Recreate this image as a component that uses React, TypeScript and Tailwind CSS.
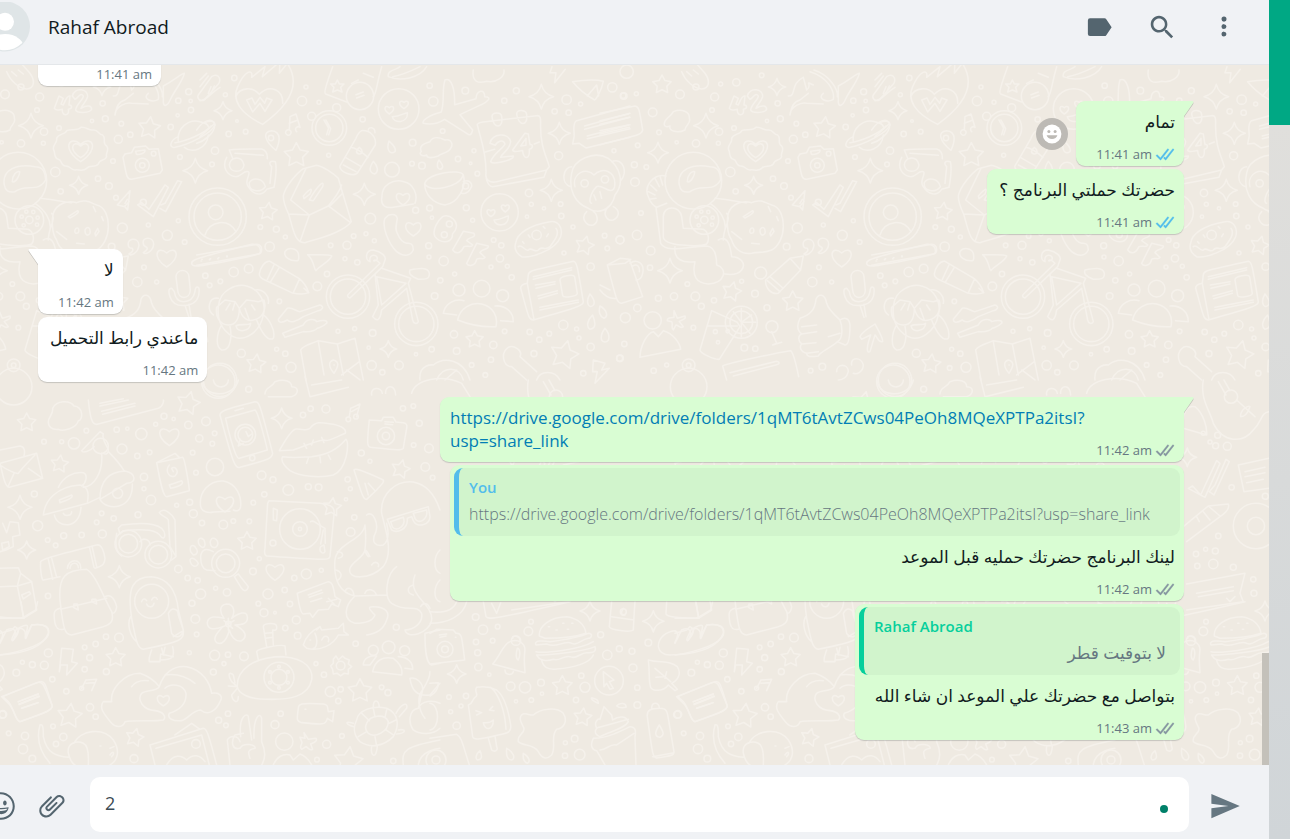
import React from "react";

type Dot = [number, number, number];

const starPath = (x: number, y: number, r: number, turn = 0) => {
  let d = "";
  for (let i = 0; i < 10; i++) {
    const a = -Math.PI / 2 + turn + (i * Math.PI) / 5;
    const k = i % 2 ? r * 0.52 : r;
    d += (i ? "L" : "M") + (x + k * Math.cos(a)).toFixed(1) + " " + (y + k * Math.sin(a)).toFixed(1);
  }
  return d + "Z";
};

const sparkPath = (x: number, y: number, r: number) => {
  const k = r * 0.2;
  return `M${x} ${y - r}Q${x + k} ${y - k} ${x + r} ${y}Q${x + k} ${y + k} ${x} ${y + r}Q${x - k} ${y + k} ${x - r} ${y}Q${x - k} ${y - k} ${x} ${y - r}Z`;
};

const heartPath = (x: number, y: number, r: number) =>
  `M${x} ${y + r}C${x - r * 1.6} ${y} ${x - r} ${y - r * 1.3} ${x} ${y - r * 0.45}C${x + r} ${y - r * 1.3} ${x + r * 1.6} ${y} ${x} ${y + r}Z`;

interface LayerProps {
  x: number;
  y: number;
  dots: Dot[];
  stars: Dot[];
  sparks: Dot[];
  hearts: Dot[];
  lines: string[];
}

function Layer({ x, y, dots, stars, sparks, hearts, lines }: LayerProps) {
  return (
    <g transform={`translate(${x} ${y}) scale(0.3333)`}>
      {dots.map(([cx, cy, r], i) => (
        <circle key={i} cx={cx} cy={cy} r={r} />
      ))}
      <path d={stars.map(([a, b, r], i) => starPath(a, b, r, (i % 3) * 0.12)).join("")} />
      <path d={sparks.map(([a, b, r]) => sparkPath(a, b, r)).join("")} />
      <path d={hearts.map(([a, b, r]) => heartPath(a, b, r)).join("")} />
      <path d={lines.join("")} />
    </g>
  );
}

const layers: LayerProps[] = [
  {
    x: 200,
    y: 5,
    dots: [
      [103, 24, 8], [76, 74, 6], [318, 51, 6], [306, 93, 14], [357, 97, 6], [111, 153, 4], [86, 192, 8], [137, 185, 7], [45, 242, 11], [36, 283, 7],
      [488, 148, 8], [386, 256, 6], [689, 47, 8], [700, 94, 14], [796, 62, 10], [913, 92, 8], [949, 62, 9], [1100, 89, 14], [1064, 124, 8], [1106, 128, 8],
      [1142, 102, 6], [1237, 52, 14], [1270, 77, 8], [1076, 257, 12], [1242, 242, 6], [638, 218, 10], [636, 281, 7], [666, 287, 10], [728, 183, 7], [774, 267, 8],
      [822, 242, 6], [812, 280, 4], [832, 311, 7], [987, 369, 11], [994, 403, 6], [1032, 415, 5], [1082, 402, 7], [1084, 438, 8], [981, 440, 5], [647, 421, 9],
      [689, 414, 9], [696, 443, 5], [799, 413, 9], [818, 451, 6], [511, 446, 16], [461, 498, 7], [498, 491, 6], [523, 512, 6], [441, 526, 12], [392, 526, 7],
      [435, 566, 6], [472, 577, 8], [181, 471, 7], [229, 478, 9], [256, 501, 6], [209, 530, 14], [101, 606, 14], [146, 596, 13], [16, 617, 8], [61, 634, 7],
      [29, 646, 7], [381, 612, 8], [352, 649, 13], [238, 694, 7], [686, 527, 9], [687, 561, 6], [731, 573, 14], [764, 612, 6], [721, 631, 8], [704, 678, 10],
      [873, 591, 6], [900, 565, 11], [922, 589, 6], [935, 622, 8], [881, 510, 7], [904, 526, 8], [1092, 549, 6], [1119, 471, 6], [1214, 497, 7], [1222, 535, 7],
      [1260, 509, 12], [1172, 590, 11], [1090, 765, 14], [1130, 777, 6], [1137, 804, 6], [1172, 831, 11], [1048, 791, 7], [1018, 809, 8], [989, 786, 8], [914, 784, 7],
      [762, 793, 11], [880, 825, 11], [873, 869, 8], [1002, 851, 9], [815, 885, 7], [770, 843, 10], [695, 838, 8], [518, 789, 10], [464, 776, 6], [414, 784, 6],
      [506, 833, 5], [648, 853, 5], [597, 886, 13], [515, 886, 14], [547, 907, 8], [273, 892, 15], [224, 894, 7], [256, 851, 8], [230, 838, 6], [124, 850, 12],
      [856, 915, 7], [1150, 910, 8], [1260, 865, 10],
      [596, 117, 61], [899, 427, 56], [480, 78, 41], [388, 174, 52], [388, 174, 41], [53, 440, 86], [53, 440, 71], [47, 427, 22], [213, 204, 8], [576, 299, 22],
      [444, 680, 65], [444, 680, 53], [649, 762, 65], [649, 762, 53], [748, 462, 9], [733, 494, 9], [1010, 495, 14], [1154, 340, 11], [1215, 328, 11],
      [797, 348, 9], [60, 930, 50], [777, 660, 18], [845, 656, 25], [908, 677, 18], [335, 139, 12], [410, 113, 12],
    ],
    stars: [[289, 256, 38], [204, 425, 28], [1154, 527, 29], [824, 809, 27], [168, 882, 30], [1093, 855, 44]],
    sparks: [[69, 122, 27], [1024, 80, 37], [1078, 190, 33], [493, 373, 33], [1054, 361, 33], [565, 837, 25]],
    hearts: [[568, 119, 13], [612, 103, 13], [873, 428, 12], [916, 414, 12], [609, 385, 20], [640, 475, 23]],
    lines: [
      "M188 163C120 130 95 90 113 50C135 0 160 -5 155 22L195 -10M195 -10L187 20L240 -25L238 10L262 -20C295 30 290 90 188 163M107 80C120 50 160 50 178 73C210 40 250 60 248 100",
      "M140 90L158 126L180 100L195 124L216 90L200 84L194 100L180 82L165 103L156 84Z",
      "M0 92C20 92 30 70 60 52M0 50L25 18M0 30L20 10",
      "M398 -10C380 40 370 70 377 72L440 96M545 -10C530 40 530 70 520 80M412 30L418 42L432 42L422 52L426 66L412 60L398 66L402 52L392 42L406 42ZM468 74L490 66M470 84L492 76M455 40L475 30M490 10L520 22",
      "M565 20C560 0 590 0 600 -10M565 20C600 35 660 25 680 -10M578 20C610 15 640 0 660 -10M820 0C815 35 835 42 860 34C890 40 915 20 912 0",
      "M577 140C600 140 610 130 622 128C625 160 580 162 577 140ZM882 450C905 450 912 440 925 438C928 470 886 472 882 450Z",
      "M735 30C755 20 765 60 764 104L828 86C830 60 855 55 854 80C880 80 860 98 844 104L780 134L818 180C815 195 810 198 800 190L734 148C715 160 690 165 670 160C665 150 690 135 724 126C735 90 725 60 735 30Z",
      "M1056 -10L1050 8L1068 8L1064 38L1096 -2",
      "M1118 35C1150 30 1190 28 1210 34C1205 60 1190 85 1184 90C1150 70 1130 50 1118 35ZM1190 45L1162 78M1190 45L1196 78",
      "M1290 108L1130 152C1115 160 1125 190 1122 202L1118 222L1138 220L1158 234L1290 202M1154 168L1290 130M1154 178L1290 142M1162 198L1290 164M1162 206L1290 176",
      "M288 132L270 140L268 180M288 132L300 172M268 160L294 150M268 180A8 8 0 1 0 262 195A8 8 0 0 0 268 180M300 172A8 8 0 1 0 290 185",
      "M372 150L386 174L380 194M378 150L392 176L386 194",
      "M-10 180C10 150 40 140 44 165C45 190 10 215 -10 220M0 200L42 162M228 241C195 215 185 185 215 182C245 185 240 215 228 241Z",
      "M485 182C510 180 530 200 526 225L475 305C465 325 415 305 420 288L468 205C472 195 475 187 485 182ZM505 180C505 170 525 170 525 188M452 232C470 235 490 250 504 262M436 262L484 290M430 285L468 305M478 232C490 240 488 252 478 252C466 250 468 240 478 232Z",
      "M567 213C580 225 590 235 585 245C570 255 558 240 567 213ZM520 274C535 290 536 305 524 312C508 308 506 295 520 274ZM717 270C730 285 732 295 720 298C710 295 710 280 717 270Z",
      "M664 245C655 225 675 220 690 215C700 195 725 205 735 210C755 205 760 225 752 235C745 250 720 250 715 258C695 265 680 265 680 255C665 262 655 250 664 245Z",
      "M833 168C828 160 840 158 850 156L1010 137C1022 136 1022 145 1022 160C1020 230 1040 260 1048 290L1040 300L890 335C870 340 855 330 858 310C860 250 840 200 833 168ZM878 350L1032 322L1040 300M858 320C860 340 870 350 878 350M856 246L884 238M1003 222L1018 216",
      "M876 140C876 125 905 125 905 140C912 175 880 180 876 140ZM950 132C950 115 980 120 980 134C985 170 955 170 950 132Z",
      "M870 220C875 190 925 185 932 215C930 240 905 250 902 262L940 258C945 270 880 285 872 275C880 250 910 235 915 222C910 205 890 215 886 226ZM975 190L938 240C940 250 965 240 968 242C970 270 990 270 988 238C1000 235 1000 222 990 224L985 192ZM962 228L978 205L978 226Z",
      "M88 240C120 236 160 238 185 237C195 240 203 250 202 266M88 240L98 265M80 262C65 290 80 318 108 320C125 320 130 300 145 305C155 310 130 335 145 350C160 375 185 380 200 358L222 352C228 320 230 290 226 275C210 270 205 280 215 290L210 340M105 250L190 256M88 285C90 260 125 255 132 285C130 310 90 310 88 285ZM148 338C160 320 190 325 196 350C180 370 145 365 148 338Z",
      "M250 378C255 350 290 310 310 296L350 286C370 290 400 310 415 325L428 370L454 455C430 490 340 510 315 518C285 520 280 480 266 432C255 410 250 395 250 378ZM272 390L328 435L385 408C400 390 420 360 425 345M272 390L318 295M266 432L328 435L300 515M388 410L452 458M428 370L388 410M310 378C330 355 340 350 330 372L312 386ZM328 390C350 350 375 325 368 350L340 392Z",
      "M15 495C30 450 85 445 108 485M546 380C545 345 580 325 612 335C640 340 655 375 645 400M546 380C540 410 560 415 580 412L640 402",
      "M674 342C680 310 780 295 790 315C800 350 775 400 735 405C695 400 675 370 674 342ZM674 342C690 370 780 350 788 318M790 335C810 325 820 345 812 355C805 370 790 372 785 370",
      "M565 436C580 430 590 435 592 445C588 470 585 480 592 490C600 510 610 518 620 520C635 518 640 525 640 540C630 560 610 560 590 545C565 520 545 470 555 445Z",
      "M728 440C750 430 775 455 768 475C765 490 755 485 757 500C750 520 720 520 705 500C695 480 715 450 728 440ZM790 484L822 490C830 505 805 500 800 512L818 525C815 535 800 525 792 530C780 555 765 550 758 540ZM830 520L865 528C868 540 845 535 840 548L855 562C850 572 838 560 830 568C825 590 805 590 800 580Z",
      "M947 520C950 490 990 465 1050 455C1075 450 1090 475 1082 500C1065 545 985 565 965 560C950 550 942 535 947 520ZM955 530C965 520 975 545 985 540C995 530 1005 550 1015 540C1025 525 1035 545 1050 530C1065 510 1080 490 1068 475M985 495L990 502M968 515L972 520M1030 470L1035 475M1040 500L1045 492",
      "M1115 310C1120 270 1180 240 1225 265C1260 290 1275 340 1245 375C1235 420 1195 435 1165 415C1125 400 1105 360 1115 310ZM1125 350C1115 310 1160 290 1182 315C1205 290 1250 300 1244 350C1235 380 1205 340 1190 350C1170 370 1165 400 1175 400M1200 365L1205 385M1182 375L1188 390M1115 290C1090 290 1080 340 1112 350M1235 275C1270 260 1285 310 1262 332M1160 425C1140 445 1160 470 1180 465C1200 455 1190 430 1180 425M1225 410C1205 430 1220 455 1240 450C1260 440 1260 420 1240 410",
      "M-10 555L170 523C190 525 188 550 175 552L-10 586M5 568h2M30 566h2M55 563h2M80 558h2M293 572C270 575 250 560 255 545C265 530 290 535 295 550C298 565 295 572 293 572",
      "M323 554C350 556 385 552 395 558C390 575 360 585 348 602C340 595 345 575 323 554Z",
      "M178 612C180 595 195 570 210 574L298 626C315 640 322 655 326 668C310 675 290 672 275 668L190 628C180 622 178 618 178 612ZM202 628L222 585M212 635L238 592M298 628L280 668M326 668L312 655",
      "M448 670L540 580C520 560 515 580 530 570C540 555 505 545 510 575C495 570 495 540 520 540C545 545 560 560 555 570L548 590L450 684C442 682 440 675 448 670ZM530 620L618 640L545 705ZM545 595L632 625L625 640L655 755C650 765 640 760 638 750L620 655L545 720C540 755 530 755 518 740L535 705L525 612M630 600C655 595 685 590 688 610C690 630 670 628 655 628C635 620 625 612 630 600Z",
      "M56 705C60 660 110 640 140 648C180 658 200 700 190 735C180 790 130 815 100 800C60 780 50 740 56 705ZM50 712L75 690L105 695L118 715L140 690L175 695L192 690M78 720L90 700M98 720L104 700M135 715L148 750M155 705L165 720M50 712C45 740 60 765 85 765C110 765 118 740 118 715C125 745 145 755 160 750C190 745 200 715 192 690M108 768C120 760 140 768 152 760C150 785 112 790 108 768ZM65 765C50 790 45 830 65 840C95 845 95 790 90 770M170 750C185 790 205 815 220 805C228 780 205 745 190 735M55 685C25 680 20 720 40 735M165 660C190 655 210 680 205 700",
      "M235 748L262 715C275 710 290 725 300 725L360 705C375 710 365 722 355 722L310 740C290 755 270 760 262 750C245 760 235 758 235 748ZM248 790L310 765C320 745 345 745 350 755C365 750 385 750 380 760C370 770 365 770 352 775C340 788 325 785 310 785L255 802Z",
      "M318 930L302 840C310 825 340 820 355 812L412 822L465 805L490 930M355 815L372 915M412 822L430 915M400 870C385 875 385 890 402 910C415 890 420 875 400 870ZM402 885h1M425 915L478 875M440 900L480 930",
      "M773 750C780 715 815 695 845 702C880 710 895 740 888 770C850 772 810 765 773 750ZM730 730C735 700 765 685 792 692M770 735L730 730M885 708C915 705 940 725 940 755L902 752",
      "M985 615C985 600 1000 602 1120 574C1130 574 1132 585 1150 695C1150 705 1145 710 1000 750C985 750 985 735 962 655C962 645 970 642 982 640ZM982 640L1002 748M1000 620L1115 593M1000 628L1115 600M1006 645L1065 635M1008 655L1065 642M1014 678L1072 662M1016 686L1072 670M1020 712L1135 690M1020 720L1135 697M1080 630C1080 618 1120 612 1124 620L1132 670C1130 680 1090 685 1088 676Z",
      "M1170 672C1185 690 1188 705 1172 710C1160 705 1160 690 1170 672ZM1200 708C1222 720 1225 740 1212 745C1200 740 1195 725 1200 708ZM1178 735C1188 760 1188 775 1170 778C1158 770 1162 750 1178 735ZM1215 775C1232 795 1230 815 1215 816C1200 815 1200 795 1215 775Z",
      "M660 930C655 880 700 885 700 885C730 860 790 865 810 930M710 930C730 885 780 890 790 930M735 930L770 900M1010 905L960 860C970 840 940 825 925 832C900 850 910 890 935 890L980 930M1010 930C1020 900 1065 900 1080 930",
      "M1180 870L1215 880L1205 900L1228 895L1185 940L1192 905L1178 905Z",
    ],
  },
  {
    x: 600,
    y: 5,
    dots: [
      [80, 5, 20], [71, 78, 10], [109, 71, 6], [158, 127, 13], [240, 73, 13], [288, 51, 9], [344, 81, 12], [336, 120, 7], [362, 42, 6], [409, 37, 11],
      [485, 16, 7], [357, 185, 11], [402, 174, 7], [355, 220, 6], [288, 220, 11], [177, 187, 7], [230, 217, 5], [113, 226, 7], [103, 284, 9], [139, 291, 7],
      [105, 336, 13], [123, 429, 7], [60, 510, 12], [111, 495, 14], [152, 542, 13], [150, 593, 8], [533, 100, 8], [541, 146, 9], [501, 153, 5], [589, 161, 7],
      [616, 194, 8], [580, 208, 12], [791, 65, 9], [760, 92, 8], [797, 93, 5], [798, 120, 8], [758, 136, 5], [737, 171, 8], [765, 261, 7], [564, 273, 7],
      [391, 306, 14], [519, 326, 8], [552, 348, 10], [407, 364, 8], [573, 383, 7], [655, 397, 9], [592, 474, 15], [670, 465, 6], [760, 452, 6], [727, 496, 15],
      [560, 530, 10], [779, 516, 7], [637, 636, 14], [657, 592, 7], [695, 636, 6], [482, 609, 18], [425, 634, 6], [465, 671, 10], [501, 713, 9], [262, 642, 7],
      [175, 685, 9], [222, 679, 11], [286, 679, 13], [304, 709, 9], [342, 691, 8], [112, 714, 11], [76, 743, 15], [73, 822, 8], [280, 773, 7], [59, 865, 9],
      [433, 833, 10], [466, 836, 8], [354, 817, 5], [346, 785, 6], [383, 784, 5], [200, 885, 6], [161, 902, 8], [632, 902, 7], [667, 890, 10],
      [280, 332, 85], [313, 450, 43], [313, 450, 11], [290, 440, 5], [304, 425, 5], [325, 426, 5], [338, 443, 5], [336, 464, 5], [296, 466, 5],
      [652, 286, 21], [652, 286, 8], [686, 251, 7], [266, 886, 19], [266, 886, 7], [266, 950, 55], [424, 757, 48], [424, 757, 34], [158, 751, 26],
      [516, 770, 18], [880, 935, 50],
    ],
    stars: [[186, 44, 29], [673, 174, 34], [395, 665, 30], [578, 695, 32]],
    sparks: [[531, 51, 26], [318, 167, 37], [174, 248, 31], [811, 302, 37], [461, 346, 27], [210, 602, 37]],
    hearts: [[467, 239, 36], [467, 239, 24], [725, 562, 29]],
    lines: [
      "M245 5C255 30 280 55 305 57C330 55 330 30 315 10L280 -30M260 5L275 18M280 0L295 12",
      "M402 78L388 115C395 125 405 118 412 118C410 140 435 140 430 118C445 115 440 105 432 105L435 78C425 75 420 95 415 105L408 102L415 85ZM442 78C450 50 490 55 488 80C485 95 470 105 468 115C485 105 500 105 500 118C495 130 455 130 452 120C455 100 475 90 475 78C465 65 460 85 450 88Z",
      "M570 135C570 110 605 95 620 100L670 102M565 78C590 80 570 40 610 22M610 22L620 60C640 45 610 30 640 45M630 5C680 20 705 60 700 88C680 100 650 85 670 70M625 70L600 90C580 95 575 110 570 135M642 0C690 15 715 60 712 80",
      "M715 48C750 30 770 10 778 10C775 30 750 60 738 85C728 110 715 112 715 95Z",
      "M820 75L860 20C875 10 890 20 882 40L838 90C825 95 815 85 820 75ZM850 70L858 50M858 70L868 48",
      "M0 130L105 108C118 110 118 120 128 180C125 195 115 195 0 224M0 152L85 132M0 163L88 142M0 182L85 165M0 192L88 172",
      "M193 165C190 145 210 145 220 125C245 115 270 125 268 145C275 160 255 165 255 180C235 190 205 185 210 168C200 172 195 170 193 165Z",
      "M386 240C380 225 398 220 395 205C400 190 420 195 425 182C440 175 455 185 468 172C485 170 490 182 505 180C520 178 520 195 533 195C545 205 530 220 545 228C555 240 540 250 545 260C540 275 525 265 520 282C510 295 495 282 485 295C470 308 460 295 450 300C435 300 435 285 420 288C405 285 412 270 400 268C385 262 392 250 386 240Z",
      "M600 252L620 248L628 232L662 228L672 238L700 236L712 300L705 310L620 328C605 328 605 320 594 262ZM632 244L660 240C662 250 640 256 634 252Z",
      "M760 215C755 175 790 145 825 155C840 158 850 165 850 170M778 232C800 250 845 240 850 195M760 200C735 210 730 235 750 232C790 225 860 190 870 165C870 150 850 152 840 158M750 218C780 215 840 190 858 168",
      "M615 362L577 405L600 410L608 420ZM600 400L607 388M600 408L612 395",
      "M638 405L650 398L672 418L720 345L730 352L685 440ZM705 415L722 425L770 335L758 332L720 400L708 405",
      "M238 345C230 300 275 280 330 290C350 290 360 300 362 330C340 370 300 340 270 365C250 370 240 360 238 345ZM262 335C262 315 275 302 284 305C285 315 272 340 262 335",
      "M198 318C160 310 130 350 145 380C150 400 165 410 170 412L200 400M180 318L188 345M165 325L178 350M152 345L170 362M145 365L165 375M148 388L168 385M190 440C190 405 240 405 245 440L250 475L310 478C325 485 330 510 320 522C300 530 190 530 190 500ZM168 412L182 520C200 550 260 530 320 528C345 530 350 560 350 585M225 530C220 570 250 580 285 575C275 620 290 640 325 642C375 640 385 595 350 585M355 510C380 495 390 520 395 560C420 560 440 580 425 600C410 620 375 612 372 612M345 385C400 390 430 400 440 398M370 510C370 470 395 450 380 430M330 400C360 420 380 450 375 480",
      "M385 430C395 400 430 390 455 398C480 385 500 400 515 405C540 410 550 440 550 470C550 500 535 530 515 540C490 550 475 545 455 550C420 555 400 530 395 510C380 490 380 450 385 430ZM430 440L458 422C465 425 455 435 435 444ZM480 480C485 468 498 470 495 490C488 500 480 495 480 480ZM510 490L518 475L522 485L512 498ZM450 480C455 468 465 475 460 488C452 492 448 488 450 480ZM455 520L478 522M530 440L535 452M505 410L512 425M395 485L425 508",
      "M610 525C605 505 640 500 642 525C640 550 615 560 612 552C625 545 625 540 622 535C612 535 610 530 610 525ZM655 520C650 500 685 498 686 522C685 545 660 555 655 548C668 540 668 535 665 532C658 530 655 525 655 520Z",
      "M800 580C800 570 810 565 980 523C1000 520 1010 535 1005 550C985 560 830 588 815 588C805 588 800 585 800 580ZM828 573h2M853 569h2M878 566h2M905 560h2",
      "M497 630L570 565L610 558L602 600L535 670C515 675 495 655 497 630ZM510 620L550 655M502 632L540 665M570 565L602 600",
      "M753 620C755 595 790 595 792 620L796 660C795 690 760 690 758 660ZM740 655C730 655 730 665 735 680C745 710 775 708 790 705C815 700 825 680 822 655C815 645 810 655 810 665C805 690 790 695 775 695C755 695 750 680 748 665ZM780 706L792 742M792 703L798 740",
      "M22 585L60 565L88 568L128 680L65 700C50 700 50 690 22 585ZM22 585L75 580L92 568M90 580C110 565 135 580 128 610C125 625 115 630 108 630M98 588C112 580 120 590 118 605M0 645L30 660M0 660C15 680 30 688 50 685",
      "M120 862C120 830 140 790 160 785L175 800L190 782C220 790 240 820 242 838ZM222 722L232 745L255 738C260 750 240 750 238 755L250 770C240 778 235 765 228 765L220 780C212 775 220 762 215 755L202 752C200 742 215 745 222 742Z",
      "M335 722L412 757L420 770L358 868C345 870 300 850 300 840L335 722ZM322 768L412 768M424 757L400 725M424 757L450 790M424 757L455 735M424 757V800M424 757V715M424 757H468M515 785L530 820L518 825L545 817",
      "M648 688C655 670 675 670 680 700C685 720 715 745 720 750C728 770 728 800 718 810C700 830 660 845 655 858C630 862 620 860 620 850C600 845 598 830 605 822C592 812 595 795 605 792C590 780 590 765 600 745C630 735 645 720 648 688ZM605 792L650 785M605 822L648 818M620 850L655 845M650 765L605 770M720 750C735 740 748 745 750 765C750 805 745 825 735 825L712 815M685 800L720 790",
      "M780 800C790 780 815 770 825 762C835 780 850 805 848 815C835 820 832 800 825 795L810 845C800 850 798 835 812 795L785 808Z",
      "M380 930L368 888C375 880 550 845 572 842C582 850 590 890 596 920M390 908L530 874C540 876 540 882 530 884L400 918M710 905C710 880 745 880 745 905C740 925 725 930 715 930M755 885C750 860 785 860 790 885C790 905 770 915 760 910",
    ],
  },
  {
    x: 0,
    y: 335,
    dots: [
      [132, 125, 7], [185, 125, 6], [222, 130, 17], [259, 92, 7], [350, 89, 8], [382, 86, 5], [424, 102, 17], [366, 147, 15], [449, 157, 7], [412, 168, 8],
      [467, 73, 6], [492, 49, 9], [521, 57, 5], [565, 75, 11], [618, 64, 13], [598, 115, 11], [644, 100, 7], [637, 131, 7], [578, 158, 7], [588, 218, 7],
      [432, 231, 11], [432, 266, 6], [453, 300, 14], [569, 307, 9], [530, 316, 6], [580, 341, 12], [606, 369, 8], [670, 374, 13], [700, 363, 7], [748, 364, 7],
      [760, 308, 7], [793, 283, 8], [785, 226, 13], [819, 239, 9], [865, 270, 16], [925, 260, 9], [956, 262, 10], [909, 45, 8], [932, 26, 8], [978, 27, 12],
      [1209, 25, 8], [1240, 18, 7], [1258, 70, 9], [1241, 135, 7], [1287, 145, 13], [1084, 159, 9], [1110, 184, 6], [1276, 201, 13], [1298, 233, 7], [1043, 238, 8],
      [1051, 266, 6], [1038, 298, 5], [1063, 352, 8], [1052, 396, 13], [103, 282, 9], [113, 377, 15], [143, 420, 7], [167, 436, 7], [191, 407, 9], [245, 405, 8],
      [307, 402, 12], [305, 340, 7], [341, 355, 8], [414, 344, 9], [290, 367, 7], [144, 588, 8], [535, 507, 11], [563, 534, 8], [593, 541, 8], [602, 582, 15],
      [576, 610, 9], [586, 657, 13], [590, 703, 7], [647, 565, 6], [681, 577, 11], [759, 514, 10], [778, 476, 6], [804, 582, 15], [854, 570, 8], [870, 612, 8],
      [775, 611, 7], [792, 638, 12], [825, 638, 4], [889, 660, 12], [856, 684, 8], [893, 707, 10], [883, 534, 8], [919, 522, 15], [964, 511, 6], [1067, 731, 8],
      [1189, 682, 9], [145, 759, 12], [133, 796, 12], [97, 794, 9], [67, 787, 6], [49, 818, 10], [157, 838, 8], [199, 874, 8], [254, 742, 7], [287, 732, 8],
      [318, 710, 8], [357, 713, 13], [269, 773, 9], [254, 808, 8], [319, 815, 9], [568, 758, 6], [644, 766, 15], [684, 764, 8], [732, 769, 13], [672, 791, 6],
      [640, 816, 9], [948, 791, 6], [972, 824, 8], [991, 875, 15], [1022, 868, 8], [1015, 903, 8], [1145, 862, 7], [1164, 878, 9], [270, 922, 11], [287, 950, 8],
      [159, 979, 7], [190, 1011, 11], [168, 1032, 8], [75, 1008, 11], [26, 1000, 7], [69, 1047, 14], [97, 1076, 10], [402, 1076, 12], [684, 941, 8], [656, 961, 9],
      [678, 976, 7], [842, 941, 8], [825, 974, 12], [980, 1033, 12], [1026, 1008, 7], [951, 1079, 7], [1180, 1083, 8], [9, 943, 11],
      [736, 104, 31], [736, 104, 22], [757, 174, 8], [645, 201, 26], [900, 387, 61], [900, 387, 22], [900, 387, 5], [819, 429, 9], [385, 431, 40], [385, 431, 28],
      [475, 464, 40], [475, 464, 28], [677, 490, 42], [677, 490, 28], [455, 604, 51], [837, 832, 45], [837, 832, 24], [837, 800, 4], [864, 816, 4], [864, 848, 4],
      [837, 864, 4], [810, 848, 4], [810, 816, 4], [1158, 108, 26], [1158, 108, 11], [1022, 797, 13], [1120, 751, 15], [1166, 742, 19], [1214, 752, 15],
      [588, 1032, 13], [853, 1025, 26], [353, 280, 15], [302, 138, 23], [685, 672, 8],
    ],
    stars: [[80, 68, 29], [179, 192, 27], [565, 10, 36], [741, 424, 29], [996, 322, 29], [1202, 208, 29], [347, 773, 30], [209, 948, 38], [404, 1013, 28], [1080, 873, 37], [1045, 1085, 45]],
    sparks: [[845, 55, 31], [60, 322, 36], [80, 450, 27], [358, 530, 33]],
    hearts: [[508, 108, 29], [825, 514, 27], [675, 310, 26], [490, 900, 18]],
    lines: [
      "M145 65C145 50 160 45 158 25C170 0 210 0 222 18C250 20 250 60 235 62C230 85 190 95 175 88C155 90 145 80 145 65Z",
      "M265 0C270 50 275 75 292 73L475 25C490 20 492 0 490 0M300 10L370 -4M300 18L385 0M305 34L405 10M308 43L405 18",
      "M0 190L110 160L128 235L28 262C15 262 10 230 0 190ZM5 198C20 210 50 222 55 220C70 200 90 180 105 165M25 258L42 220M85 205L128 235M0 150L60 138C75 140 75 155 72 168",
      "M245 152L300 95L310 102C305 115 315 130 324 145C328 160 318 165 310 160M245 152C248 160 270 155 282 140M305 160C310 220 280 260 250 262M325 155C350 180 365 200 372 212M130 345C135 300 170 260 240 255C270 260 265 290 262 310ZM175 262C190 230 220 215 250 218C265 225 258 250 245 258M163 345C170 385 240 390 243 322M190 340C195 350 215 348 215 335M300 298C300 240 330 215 375 213C410 220 410 250 380 250ZM300 298C320 335 400 330 397 252M262 310L300 292M178 300L215 285C222 292 205 300 180 308Z",
      "M660 45C660 35 665 30 765 5C778 5 780 12 818 160C816 175 810 178 720 202C705 204 702 200 660 45ZM677 55L765 30C775 35 800 140 802 150L718 175C705 180 680 70 677 55ZM705 32L730 25M738 95L745 110L755 102M720 118L715 138L730 130",
      "M470 188L525 160L538 172M470 188L548 172C555 175 568 265 568 272L500 290C488 290 480 240 470 188ZM508 195C495 210 505 235 525 228C540 215 525 195 515 205L520 215M508 255L545 242C552 250 545 258 512 265Z",
      "M602 320C595 275 630 240 670 243C710 250 725 290 722 320C720 332 710 335 700 330M602 320C605 335 625 340 640 336L690 334",
      "M838 152C840 150 870 90 888 87C905 85 920 95 930 85C945 65 960 65 1000 73C1030 80 1040 90 1036 100C1000 115 985 125 970 120C940 125 910 140 880 150ZM848 170C880 175 900 172 935 170C990 165 1020 140 1038 118C1050 130 1040 210 1000 225C960 235 900 230 870 212C850 195 842 180 848 170ZM912 130L920 145M940 120L935 135M965 112L972 128M925 175L920 190M960 170L962 188M985 165L992 178",
      "M1052 25L1080 12L1070 50M1052 25L1048 50M1055 35L1078 22M1045 58m-7 0a7 7 0 1 0 14 0a7 7 0 1 0 -14 0M1068 50m-7 0a7 7 0 1 0 14 0a7 7 0 1 0 -14 0",
      "M1108 60L1145 62L1150 52L1180 52L1188 66L1210 68C1220 70 1222 75 1220 85L1210 145C1205 152 1190 150 1112 142C1102 140 1100 135 1108 60ZM1155 65L1180 67M1155 72L1178 74",
      "M1062 210C1065 205 1075 205 1150 240C1155 250 1140 255 1130 270L1100 298C1090 300 1085 280 1062 210ZM1095 250L1105 285M1105 250L1125 272",
      "M807 302L960 310C1000 315 1005 325 1002 345L990 470C985 482 980 480 800 468C792 465 793 455 795 445L803 310ZM932 365C940 358 950 372 975 385L976 430M970 390L962 432M820 325L832 330L830 362L820 360ZM962 440C955 455 970 465 975 455L972 435Z",
      "M1145 340C1140 280 1190 240 1240 246C1290 255 1310 300 1320 330M1162 358L1285 320L1290 350C1290 375 1250 385 1240 362L1235 350L1222 355C1225 390 1190 400 1175 390ZM1172 365L1210 352C1220 380 1190 395 1178 382ZM1240 340L1280 330C1285 360 1255 375 1245 355ZM1145 340C1160 400 1180 460 1150 500C1110 540 1040 540 1050 505C1060 480 1090 475 1095 450C1100 410 1095 380 1095 375C1090 420 1010 430 1005 480C1000 540 1020 580 1065 588L1160 585M1100 345C1120 330 1135 370 1128 395C1110 430 1130 440 1150 435C1170 420 1165 390 1160 370M1190 500C1160 520 1150 590 1175 610C1220 640 1250 610 1265 640C1270 670 1240 690 1215 690C1220 720 1290 700 1295 660C1300 610 1220 590 1245 525M1065 588C1030 620 1030 660 1065 670C1100 670 1120 660 1125 645C1110 630 1100 620 1120 620C1160 620 1170 640 1160 660C1150 690 1130 700 1100 705M1095 580C1100 565 1120 565 1130 585",
      "M1012 455C1030 455 1035 470 1015 475M1008 510C1025 515 1030 530 1012 542M1035 575C1040 560 1060 560 1062 588M1105 470C1090 450 1095 440 1110 470M1115 495C1125 480 1140 490 1135 500M1240 555C1220 560 1220 580 1240 585M1262 620C1270 605 1285 610 1290 625",
      "M355 385L365 375C400 370 460 365 485 385C500 400 495 420 485 412C470 390 440 385 370 392L360 402L355 385ZM350 400C345 430 345 455 365 468M420 425C430 410 450 420 450 435M478 338C490 320 515 340 525 360L528 470L515 480M478 338C485 350 500 350 505 360L510 440L528 470",
      "M572 455C568 440 575 432 585 440C598 455 590 465 580 465ZM598 435C590 420 600 408 612 420C620 440 610 450 598 435ZM635 440C625 425 635 408 648 418C660 430 650 450 635 440ZM570 480C575 468 590 480 595 490C590 505 572 500 570 480ZM640 455C620 445 605 445 602 470C602 490 605 505 620 510L645 512M703 530L715 522L745 560C742 575 732 575 725 565Z",
      "M122 490C118 480 130 475 290 435C305 432 312 455 315 475C315 490 310 498 285 505M130 540C125 545 120 500 122 490M130 540L180 530M145 478L158 538M155 475L170 532M268 440L282 502M276 438L290 500M202 505C205 475 245 475 242 505M210 505C212 485 235 485 235 503",
      "M180 600C175 530 195 510 260 508C285 520 310 590 335 635C342 660 335 672 310 680L215 705C195 705 190 690 180 600ZM182 628L320 595M220 622L235 630L232 612L222 612ZM275 605L290 612L288 598L276 598ZM315 590C335 580 345 600 350 620C348 635 345 640 338 640M180 625C160 630 160 640 165 670C170 690 180 690 190 688",
      "M395 655C380 560 400 530 455 530C510 535 530 580 535 630L550 690C552 720 545 725 430 748C415 745 410 735 395 655ZM425 605C428 595 435 595 440 602M455 600C460 588 470 590 472 598M440 612C445 625 460 622 462 610M392 650C380 670 390 710 410 725M505 640C515 620 535 625 535 645L550 690C545 715 525 715 515 700ZM520 710L545 695M455 750C450 765 445 775 448 785L480 785L482 762L520 770M518 740C525 770 520 780 480 780M485 745L490 765L495 742",
      "M0 505L55 503L62 520L95 545L110 630L70 655H0M0 560L52 558L72 655M52 558L62 520M52 558L95 545M65 585L88 575L92 582L70 597Z",
      "M0 700L35 690L45 680C70 690 40 720 38 722C30 720 45 700 50 685M50 685C90 680 70 720 78 715L95 675C130 670 150 680 145 700C130 740 80 760 0 765M8 370L20 398L30 365L55 368L60 405L38 410L40 440L18 450L0 455M5 430L25 425L28 440L8 450Z",
      "M672 655C660 640 655 615 680 612C705 612 705 640 695 655C715 640 740 630 742 650C745 672 725 675 705 675C735 690 745 710 725 722C705 728 692 705 688 690C682 715 668 738 650 728C635 715 655 695 668 680C645 690 622 690 622 668C625 645 650 650 672 655ZM672 662L698 685M685 655V690M670 680L702 662",
      "M892 580L985 545C995 545 1000 555 1005 590L1022 600L1015 620L995 612L985 628L955 630L938 652L930 640L910 642C900 640 895 600 892 580ZM925 585L965 570M928 592L968 578M932 605L965 595M980 605L1010 598M985 595L1005 615",
      "M910 735C920 700 950 685 960 680L965 690L1015 685L1030 670L1032 695L1045 705L1015 705C1000 735 960 755 920 745ZM945 700C955 720 950 745 940 745M930 720h2M965 720C975 700 990 710 985 725M950 690L960 680",
      "M790 680C790 670 830 665 830 680C832 695 820 690 818 690L820 735M790 680L800 740M795 700L815 698M797 715L818 712M775 780L770 755C775 745 845 732 855 738L858 765M712 860C710 810 760 770 850 770C920 775 940 810 935 840C925 890 870 900 800 898C745 898 715 880 712 860ZM712 860L695 845C680 820 690 815 700 825L705 848M712 860L685 858M712 865L695 885C698 905 715 915 715 890",
      "M1008 768L1015 780L1028 768L1035 775L1048 780L1045 792L1055 800L1045 808L1045 822L1032 820L1022 828L1012 820L1000 822L998 808L992 798L1000 790L1000 778Z",
      "M1118 815C1125 780 1150 768 1180 775C1200 790 1210 805 1205 825ZM1090 795C1090 775 1110 765 1130 768L1110 795ZM1195 770C1225 770 1240 790 1238 808L1215 805",
      "M178 815L185 745L220 748L215 785L232 790L200 825L202 795L182 795ZM245 865L258 840L290 838L275 872M258 850L285 848M245 865m-6 0a6 6 0 1 0 12 0a6 6 0 1 0 -12 0",
      "M8 890L110 848C128 842 130 850 157 918C155 932 145 935 60 965C45 962 45 930 25 905ZM55 905L115 882M58 914L118 890M65 925L115 908",
      "M335 905C330 870 370 820 420 820C450 830 470 850 478 860C470 875 440 870 425 880C410 900 430 930 465 932C490 935 500 950 490 960C470 965 400 960 375 965C370 985 345 982 335 970C315 945 295 925 310 905ZM395 860C405 845 425 840 445 842M478 860C490 820 520 795 560 800C610 810 630 850 635 880C660 875 670 890 660 905C650 930 625 950 602 930C580 930 560 960 545 962C520 965 500 955 508 940C540 930 560 910 558 880C550 850 510 850 495 865M495 825C530 820 560 830 585 850",
      "M1070 960C1075 930 1120 915 1160 925C1195 940 1200 975 1180 1010C1150 1040 1110 1045 1080 1025C1060 1005 1060 980 1070 960ZM1100 970C1110 945 1155 940 1165 965C1165 995 1125 1015 1105 1000C1095 990 1095 980 1100 970ZM1085 940L1108 962M1120 925L1125 950M1160 930L1155 952M1188 960L1168 970M1180 1005L1158 990M1130 1038L1125 1010M1075 1010L1100 995M1120 920C1120 900 1135 895 1138 920M1188 940C1205 910 1225 905 1220 925L1198 950M1060 970C1030 960 1040 975 1062 980M1115 1040C1110 1070 1130 1080 1132 1038M1195 990C1220 985 1220 1000 1190 1002",
      "M895 925C895 912 900 908 970 912C985 915 982 920 985 935L1002 932L998 965L982 955C978 975 970 975 905 968C890 965 890 960 895 925ZM915 928h3",
      "M1230 835C1250 830 1270 850 1268 870C1285 840 1290 830 1290 815M1230 835C1235 870 1250 890 1290 885L1320 850M1268 870C1250 890 1255 930 1275 955M1268 870L1255 925C1225 930 1225 970 1240 990C1260 1005 1300 1005 1320 985M1255 925C1265 900 1300 900 1320 910",
      "M120 975C110 1010 115 1050 150 1090M120 975C130 970 130 990 130 1010C140 1060 170 1070 205 1072M205 1060C200 1030 230 1020 250 1030C270 1040 265 1080 265 1095M205 1060C210 1080 215 1090 225 1095M222 1030C240 990 310 980 340 1020C360 1050 355 1080 330 1095M330 1045L342 1040M330 1065C340 1050 345 1060 335 1070M300 1038h3",
      "M450 1035L610 985C620 985 625 1000 650 1095M450 1035L465 1095M468 1045L605 1005L628 1095M525 1005L575 970L600 988M500 1095C520 1060 545 1065 560 1080C580 1060 600 1065 615 1085",
      "M690 1095L682 1020C690 1005 715 1005 720 1025M722 1010C715 940 745 940 745 950L755 1020M762 1015C760 950 780 935 785 955L785 1025C800 1060 795 1080 785 1095M718 1045C700 1050 690 1030 705 1005L730 1000M720 1045C730 1025 770 1035 765 1045C740 1050 745 1060 750 1075",
      "M820 1095C830 1070 850 1060 870 1065L880 1080L900 1062C920 1070 930 1085 935 1095M912 998L925 1018L948 1015C955 1025 935 1030 932 1032L938 1048C928 1055 922 1040 918 1040L905 1048C895 1040 910 1030 905 1025L900 1012L915 1015Z",
      "M1210 1095C1205 1050 1215 1040 1320 1020M1255 1095C1260 1050 1320 1045 1320 1045M1275 700L1320 690M1275 700C1275 760 1280 790 1295 795L1320 790M1320 450C1300 470 1300 510 1320 520M1320 540C1300 560 1300 600 1320 605",
    ],
  },
  {
    x: 430,
    y: 535,
    dots: [
      [137, 51, 10], [159, 89, 14], [203, 80, 7], [138, 126, 8], [188, 122, 7], [143, 158, 9], [145, 201, 11], [178, 224, 5], [303, 65, 7], [295, 94, 13],
      [242, 259, 13], [285, 262, 17], [333, 248, 10], [336, 281, 5], [304, 300, 7], [258, 304, 5], [108, 288, 8], [57, 291, 7], [93, 318, 6], [62, 335, 6],
      [80, 377, 11], [512, 104, 9], [532, 165, 14], [568, 146, 9], [606, 154, 9], [655, 128, 10], [609, 204, 12], [622, 263, 8], [622, 315, 10], [454, 227, 8],
      [465, 262, 15], [438, 300, 8], [434, 416, 10], [406, 428, 6], [405, 467, 8], [449, 464, 16], [742, 344, 11], [537, 242, 43], [45, 148, 24], [45, 148, 10],
      [258, 122, 14], [580, 35, 9], [18, 480, 30], [18, 480, 12],
    ],
    stars: [[397, 258, 31], [458, 352, 28]],
    sparks: [[480, 33, 30], [670, 64, 32], [80, 222, 28]],
    hearts: [],
    lines: [
      "M0 70C50 70 100 50 110 5M0 35C40 40 70 30 80 5M160 5L168 50C175 60 190 58 420 5M185 10L200 40L212 8",
      "M188 192C210 170 220 130 240 125C265 115 285 130 285 150C280 180 285 205 285 218ZM225 210C225 225 245 228 250 215M262 145C270 145 272 165 265 180C255 175 258 160 262 145ZM248 115C245 105 270 105 270 122",
      "M328 108C325 80 360 50 410 50C445 55 465 75 468 100C440 110 400 115 345 115ZM355 80h4M378 90h4M398 70h4M425 70h4M412 88h4M318 135C310 120 340 122 360 125C400 120 440 115 475 100C490 100 485 115 475 115C450 120 440 140 420 128C390 125 380 145 350 132ZM318 155C340 160 450 150 490 125M320 165C360 165 460 155 495 140C500 155 490 158 470 158C450 158 440 180 420 170C400 165 390 185 370 178C350 185 330 180 325 172ZM335 182C340 200 350 210 380 207C430 203 480 190 490 165",
      "M545 5L538 80C540 90 600 98 610 90L612 50L615 5M545 50L612 60M580 25C570 40 575 48 585 45M710 5L708 42C712 55 800 55 805 52L842 30L848 5M805 52L798 5",
      "M0 100L20 88L70 90L78 100C95 98 95 105 104 180L0 192M28 105L50 102M30 112L48 108M76 112h2",
      "M685 140C685 110 710 95 735 92C755 100 730 130 735 130L755 90C775 80 790 90 775 120L795 82C830 65 815 85 812 110L830 75C870 70 885 80 880 105C865 140 760 165 720 165C700 165 688 155 685 140Z",
      "M655 180C690 190 720 180 742 200C755 220 745 240 725 250L742 268L735 272L715 255C700 275 670 275 662 262C655 240 660 220 655 180ZM675 205L722 245M700 230L678 232M705 235L710 215",
      "M520 215L552 240L538 245L550 265L540 268L530 250L522 260Z",
      "M740 290L855 245C870 242 870 250 892 318C890 330 885 332 795 365C780 362 780 330 760 310ZM790 305L850 282M792 312L852 288M800 325L848 308",
      "M140 262C130 275 150 285 135 292C125 300 130 310 115 315L128 410C130 420 145 420 205 405C235 400 245 395 242 375C235 330 225 290 200 270C180 260 160 258 140 262ZM182 262C205 280 225 330 228 388M138 332L155 338L140 345M188 320L178 330L192 332M160 368C175 370 185 365 190 360C190 390 165 395 160 368ZM175 415L185 450C195 458 205 450 200 440L195 408",
      "M275 345C285 335 300 348 310 345C330 325 380 320 400 340C415 365 400 385 380 388C360 410 380 440 365 465C350 480 335 475 325 455C310 430 280 440 265 425C260 405 285 400 282 385C275 370 265 355 275 345Z",
      "M510 358L522 320L545 345L548 360C570 345 590 350 595 365C585 385 540 395 510 410C485 400 500 380 508 382L595 358M490 415C530 415 570 395 600 380C618 380 618 395 615 410L618 495M490 415C480 435 485 450 500 452L525 495M510 450C530 450 540 430 560 435L575 425L612 400M500 385C490 365 505 355 510 358",
      "M652 350C650 330 662 325 690 325C710 325 712 335 715 355L732 455C732 465 728 468 680 474C668 472 668 465 652 350ZM665 325C665 305 685 305 688 322M668 470L732 458M688 375C700 395 705 405 690 412C672 410 675 395 688 375Z",
      "M490 295C480 290 482 300 505 310C505 300 500 298 490 295ZM560 318C570 305 590 310 588 322C575 325 565 322 560 318ZM150 452C158 470 155 480 142 480C135 475 138 462 150 452ZM230 445C250 455 258 475 245 480C232 480 228 465 230 445ZM280 460C298 470 302 485 292 490C280 485 278 475 280 460Z",
      "M0 310C30 315 30 385 0 390M0 250L25 248C25 270 15 280 0 288M0 415L80 403C95 410 100 440 118 495",
    ],
  },
  {
    x: 175,
    y: 315,
    dots: [
      [221, 28, 9], [1103, 166, 9], [1097, 197, 9], [1132, 199, 12], [1080, 186, 6], [1060, 160, 6], [1143, 50, 20], [1145, 322, 8], [1246, 349, 9], [1218, 438, 26],
      [1218, 438, 68], [1105, 468, 8], [1096, 513, 9], [1067, 508, 6], [1090, 552, 14], [1150, 562, 9], [1042, 558, 8], [1210, 598, 8], [1212, 640, 9], [1038, 522, 8],
    ],
    stars: [],
    sparks: [[1012, 232, 28]],
    hearts: [],
    lines: [
      "M1060 0C1050 60 1080 90 1090 130C1120 190 1180 190 1210 150C1240 120 1230 100 1257 95M1105 5L1128 45M1122 0L1140 32M1160 60L1215 110M1172 110C1170 90 1195 75 1200 80C1195 95 1185 110 1172 110Z",
      "M1000 145L1070 165C1072 140 1060 100 1035 80C1010 75 1000 100 1000 120",
      "M1015 325L1028 318L1052 345L1100 242L1110 250L1065 352ZM1078 335L1092 345L1138 245L1128 238L1095 315Z",
      "M1165 255L1257 235M1165 255L1182 335L1257 325M1185 275L1245 262M1185 290L1245 278M1190 308L1240 298",
      "M1000 440L1075 378L1135 372C1140 385 1125 400 1110 410L1010 485M1060 395L1080 420M1075 378L1110 408M1040 410L1048 425",
      "M1010 612L1185 580L1170 640L1180 665L1010 690M1040 640L1150 620M1045 650L1150 632M1130 655L1140 665L1155 650",
      "M80 0C90 60 180 50 190 0M115 0C120 30 160 25 160 0M270 42C270 20 290 25 300 5C330 -5 350 5 350 20C375 20 370 45 350 50L280 50",
      "M390 -10L405 50L520 22M410 15L500 0M590 45C585 20 620 20 622 40M632 40C630 15 660 10 662 45M710 40C720 0 800 -20 860 10L885 50",
    ],
  },
];

function Wallpaper() {
  return (
    <svg className="absolute inset-0 h-full w-full" fill="none" stroke="#f5f1eb" strokeWidth="4.6" strokeLinecap="round" strokeLinejoin="round" aria-hidden="true">
      <defs>
        <g id="doodles">
          {layers.map((l, i) => (
            <Layer key={i} {...l} />
          ))}
        </g>
      </defs>
      {[-675, 0, 675, 1350].map((x) => (
        <use key={x} href="#doodles" x={x} />
      ))}
    </svg>
  );
}

function Checks({ read }: { read?: boolean }) {
  return (
    <svg viewBox="0 0 16 15" className={read ? "h-[19px] w-5 text-[#53bdeb]" : "h-[19px] w-5 text-[#8696a0]"} fill="currentColor" stroke="currentColor" strokeWidth="0.2" role="img" aria-label={read ? "Read" : "Delivered"}>
      <path d="M15.01 3.316l-.478-.372a.365.365 0 0 0-.51.063L8.666 9.879a.32.32 0 0 1-.484.033l-.358-.325a.319.319 0 0 0-.484.032l-.378.483a.418.418 0 0 0 .036.541l1.32 1.266c.143.14.361.125.484-.033l6.272-8.048a.366.366 0 0 0-.064-.512zm-4.1 0l-.478-.372a.365.365 0 0 0-.51.063L4.566 9.879a.32.32 0 0 1-.484.033L1.891 7.769a.366.366 0 0 0-.515.006l-.423.433a.364.364 0 0 0 .006.514l3.258 3.185c.143.14.361.125.484-.033l6.272-8.048a.365.365 0 0 0-.063-.51z" />
    </svg>
  );
}

function Stamp({ time, status }: { time: string; status?: "read" | "delivered" }) {
  return (
    <div className="flex h-[18px] items-center justify-end gap-[3px] pl-2 text-[13px] leading-[18px] text-[#667781]">
      <time>{time}</time>
      {status && <Checks read={status === "read"} />}
    </div>
  );
}

interface BubbleProps {
  out?: boolean;
  tail?: boolean;
  react?: boolean;
  className?: string;
  children: React.ReactNode;
}

const tailOut = "M0 0H6.500C7.700 0 7.900 1 7.200 1.900L0 12.500z";
const tailIn = "M8 0H1.500C.3 0 .1 1 .8 1.900L8 12.500z";

function Bubble({ out, tail, react, className = "", children }: BubbleProps) {
  return (
    <li className={(out ? "justify-end " : "justify-start ") + (tail ? "mt-[15px] " : "mt-[3px] ") + "flex items-center gap-2"}>
      {react && (
        <button type="button" aria-label="React" className="flex size-8 items-center justify-center rounded-full bg-[#bdbab5]">
          <svg viewBox="0 0 20 20" className="size-5" aria-hidden="true">
            <circle cx="10" cy="10" r="9.4" fill="#fff" />
            <circle cx="6.9" cy="7.6" r="1.5" fill="#bdbab5" />
            <circle cx="13.1" cy="7.6" r="1.5" fill="#bdbab5" />
            <path d="M4.6 11.2h10.8c-.6 2.300-2.700 3.900-5.400 3.900s-4.800-1.600-5.400-3.900z" fill="#bdbab5" />
          </svg>
        </button>
      )}
      <div
        className={
          (out ? "bg-[#d9fdd3] " : "bg-white ") +
          (tail ? (out ? "rounded-l-[9px] rounded-br-[9px] " : "rounded-r-[9px] rounded-bl-[9px] ") : "rounded-[9px] ") +
          "relative shadow-[0_1px_1px_rgba(11,20,26,0.18)] " +
          className
        }
      >
        {tail && (
          <svg
            viewBox="0 0 8 14"
            className={out ? "absolute top-0 left-full h-[17px] w-[10px] text-[#d9fdd3]" : "absolute top-0 right-full h-[17px] w-[10px] text-white"}
            preserveAspectRatio="none"
            fill="currentColor"
            aria-hidden="true"
          >
            <path d={out ? tailOut : tailIn} transform="translate(0 .9)" fill="#0b141a" opacity=".2" />
            <path d={out ? tailOut : tailIn} />
          </svg>
        )}
        {children}
      </div>
    </li>
  );
}

function ArabicBody({ text, time, status }: { text: string; time: string; status?: "read" | "delivered" }) {
  return (
    <div className="pt-[9px] pr-[9px] pb-[3px] pl-3">
      <p dir="rtl" className="mb-[11px] text-[17px] leading-6 whitespace-nowrap text-[#111b21]">
        {text}
      </p>
      <Stamp time={time} status={status} />
    </div>
  );
}

function Quote({ name, text, rtl, mine }: { name: string; text: string; rtl?: boolean; mine?: boolean }) {
  return (
    <div className="px-1 pt-[3px]">
      <blockquote
        className={(mine ? "border-[#53bdeb] " : "border-[#06cf9c] ") + "h-[68px] overflow-hidden rounded-[9px] border-l-[5px] bg-[#d1f4cc] pt-[7px] pr-[14px] pl-[10px]"}
      >
        <p className={(mine ? "text-[#53bdeb] " : "text-[#06cf9c] ") + "text-[15px] leading-6 font-semibold"}>{name}</p>
        <p dir={rtl ? "rtl" : "ltr"} className={(rtl ? "text-[17px] " : "text-[16px] font-[350] ") + "mt-[3px] leading-6 whitespace-nowrap text-[#667781]"}>
          {text}
        </p>
      </blockquote>
    </div>
  );
}

const url = "https://drive.google.com/drive/folders/1qMT6tAvtZCws04PeOh8MQeXPTPa2itsI?usp=share_link";

export default function App() {
  return (
    <div className="flex h-screen overflow-hidden bg-[#f0f2f5] font-['Open_Sans','DejaVu_Sans',sans-serif]">
      <main className="flex min-w-0 flex-1 flex-col">
        <header className="flex h-[65px] shrink-0 items-center border-b border-[#e4e7ea] bg-[#f0f2f5] pr-[30px] pb-[10px]">
          <svg viewBox="0 0 50 50" className="-ml-5 size-[50px] shrink-0" aria-hidden="true">
            <clipPath id="face">
              <circle cx="25" cy="24.500" r="23.800" />
            </clipPath>
            <circle cx="25" cy="24.500" r="25" fill="#dfe5e7" />
            <g clipPath="url(#face)" fill="#fff">
              <circle cx="25" cy="19.800" r="9" />
              <path d="M5 49c1-10 9-17 20-17s17 6 20 13v8H5z" />
            </g>
          </svg>
          <h1 className="ml-[18px] flex-1 text-[19px] leading-7 text-[#111b21]">Rahaf Abroad</h1>
          <div className="flex gap-8 text-[#54656f]">
            <button type="button" aria-label="Label" className="size-[30px]">
              <svg viewBox="0 0 24 24" fill="currentColor" aria-hidden="true">
                <path d="M15.600 5H4a1.700 1.700 0 0 0-1.700 1.700v10.800A1.700 1.700 0 0 0 4 19.200h11.600c.6 0 1.100-.3 1.400-.7l4.300-6.400L17 5.700c-.3-.4-.8-.7-1.400-.7z" />
              </svg>
            </button>
            <button type="button" aria-label="Search" className="size-[30px]">
              <svg viewBox="0 0 24 24" fill="currentColor" aria-hidden="true">
                <path d="M15.9 14.3H15l-.3-.3c1-1.100 1.600-2.700 1.600-4.300 0-3.700-3-6.700-6.700-6.700S3 6 3 9.700s3 6.700 6.700 6.700c1.600 0 3.200-.6 4.300-1.600l.3.3v.8l5.100 5.100 1.500-1.500-5-5.200zm-6.200 0c-2.600 0-4.600-2.100-4.600-4.600s2.100-4.600 4.600-4.600 4.600 2.100 4.600 4.600-2 4.600-4.600 4.600z" />
              </svg>
            </button>
            <button type="button" aria-label="Menu" className="size-[30px]">
              <svg viewBox="0 0 24 24" fill="currentColor" aria-hidden="true">
                <path d="M12 7a2 2 0 1 0-.001-4.001A2 2 0 0 0 12 7zm0 2a2 2 0 1 0-.001 3.999A2 2 0 0 0 12 9zm0 6a2 2 0 1 0-.001 3.999A2 2 0 0 0 12 15z" transform="translate(0 .7)" />
              </svg>
            </button>
          </div>
        </header>

        <section className="relative flex min-h-0 flex-1 flex-col justify-end overflow-hidden bg-[#efeae2]" aria-label="Messages">
          <Wallpaper />
          <ul className="relative flex flex-col pr-[85px] pb-[25px] pl-[38px]">
            <Bubble>
              <div className="w-[123px] pt-9 pr-[9px] pb-[3px]">
                <Stamp time="11:41 am" />
              </div>
            </Bubble>
            <Bubble out tail react>
              <ArabicBody text="تمام" time="11:41 am" status="read" />
            </Bubble>
            <Bubble out>
              <ArabicBody text="حضرتك حملتي البرنامج ؟" time="11:41 am" status="read" />
            </Bubble>
            <Bubble tail>
              <ArabicBody text="لا" time="11:42 am" />
            </Bubble>
            <Bubble>
              <ArabicBody text="ماعندي رابط التحميل" time="11:42 am" />
            </Bubble>
            <Bubble out tail className="max-w-[744px]">
              <div className="pt-[9px] pr-[9px] pb-[10px] pl-[10px]">
                <a href={url} className="block text-[17px] leading-[23px] text-[#027eb5]">
                  {url}
                </a>
              </div>
              <div className="absolute right-[9px] bottom-[3px]">
                <Stamp time="11:42 am" status="delivered" />
              </div>
            </Bubble>
            <Bubble out className="min-w-[734px]">
              <Quote mine name="You" text={url} />
              <ArabicBody text="لينك البرنامج حضرتك حمليه قبل الموعد" time="11:42 am" status="delivered" />
            </Bubble>
            <Bubble out className="min-w-[329px]">
              <Quote rtl name="Rahaf Abroad" text="لا بتوقيت قطر" />
              <ArabicBody text="بتواصل مع حضرتك علي الموعد ان شاء الله" time="11:43 am" status="delivered" />
            </Bubble>
          </ul>
          <div className="absolute right-0 bottom-0 h-28 w-[7px] bg-[#c4c1ba]" />
        </section>

        <footer className="flex h-[74px] shrink-0 items-center bg-[#f0f2f5] pt-[5px] pr-[29px]">
          <button type="button" aria-label="Emoji" className="mt-[2px] -ml-[14px] size-[30px] shrink-0 text-[#54656f]">
            <svg viewBox="0 0 24 24" fill="currentColor" aria-hidden="true">
              <path d="M9.153 11.603c.795 0 1.439-.879 1.439-1.962s-.644-1.962-1.439-1.962-1.439.879-1.439 1.962.644 1.962 1.439 1.962zm-3.204 1.362c-.026-.307-.131 5.218 6.063 5.551 6.066-.25 6.066-5.551 6.066-5.551-6.078 1.416-12.129 0-12.129 0zm11.363 1.108s-.669 1.959-5.051 1.959c-3.505 0-5.388-1.164-5.607-1.959 0 0 5.912 1.055 10.658 0zM11.804 1.011C5.609 1.011.978 6.033.978 12.228s4.826 10.761 11.021 10.761S23.02 18.423 23.02 12.228c.001-6.195-5.021-11.217-11.216-11.217zM12 21.354c-5.273 0-9.381-3.886-9.381-9.159s3.942-9.548 9.215-9.548 9.548 4.275 9.548 9.548c-.001 5.272-4.109 9.159-9.382 9.159zm3.108-9.751c.795 0 1.439-.879 1.439-1.962s-.644-1.962-1.439-1.962-1.439.879-1.439 1.962.644 1.962 1.439 1.962z" />
            </svg>
          </button>
          <button type="button" aria-label="Attach" className="mt-[2px] ml-[21px] size-[30px] shrink-0 text-[#54656f]">
            <svg viewBox="0 0 24 24" fill="currentColor" aria-hidden="true">
              <path d="M1.816 15.556v.002c0 1.502.584 2.912 1.646 3.972s2.472 1.647 3.974 1.647a5.58 5.58 0 0 0 3.972-1.645l9.547-9.548c.769-.768 1.147-1.767 1.058-2.817-.079-.968-.548-1.927-1.319-2.698-1.594-1.592-4.068-1.711-5.517-.262l-7.916 7.915c-.881.881-.792 2.250.214 3.261.959.958 2.423 1.053 3.263.215l5.511-5.512c.28-.28.267-.722.053-.936l-.244-.244c-.191-.191-.567-.349-.957.04l-5.506 5.506c-.18.18-.635.127-.976-.214-.098-.097-.576-.613-.213-.973l7.915-7.917c.818-.817 2.267-.699 3.230.262.5.501.802 1.100.849 1.685.051.573-.156 1.111-.589 1.543l-9.547 9.549a3.97 3.97 0 0 1-2.829 1.171 3.975 3.975 0 0 1-2.830-1.173 3.973 3.973 0 0 1-1.172-2.828c0-1.071.415-2.076 1.172-2.830l7.209-7.211c.157-.157.264-.579.028-.814L11.500 4.360a.572.572 0 0 0-.834.018l-7.205 7.207a5.577 5.577 0 0 0-1.645 3.971z" />
            </svg>
          </button>
          <div className="ml-[23px] flex h-[55px] flex-1 items-center rounded-[10px] bg-white pr-[21px] pl-[15px]">
            <input type="text" aria-label="Type a message" defaultValue="2" className="min-w-0 flex-1 bg-transparent pb-[3px] text-[18px] leading-6 text-[#3b4a54] outline-none" />
            <span className="mt-2 size-2 rounded-full bg-[#008069]" />
          </div>
          <button type="button" aria-label="Send" className="mt-[2px] ml-[21px] size-[30px] shrink-0 text-[#667781]">
            <svg viewBox="0 0 24 24" fill="currentColor" aria-hidden="true">
              <path d="M1.101 21.757 23.800 12.028 1.101 2.300l.011 7.912 13.623 1.816-13.623 1.817-.011 7.912z" />
            </svg>
          </button>
        </footer>
      </main>
      <aside className="flex w-[21px] shrink-0 flex-col" aria-hidden="true">
        <div className="h-[125px] bg-[#00a884]" />
        <div className="flex-1 bg-linear-to-b from-[#e0dfdc] to-[#d0d5d8]" />
      </aside>
    </div>
  );
}
